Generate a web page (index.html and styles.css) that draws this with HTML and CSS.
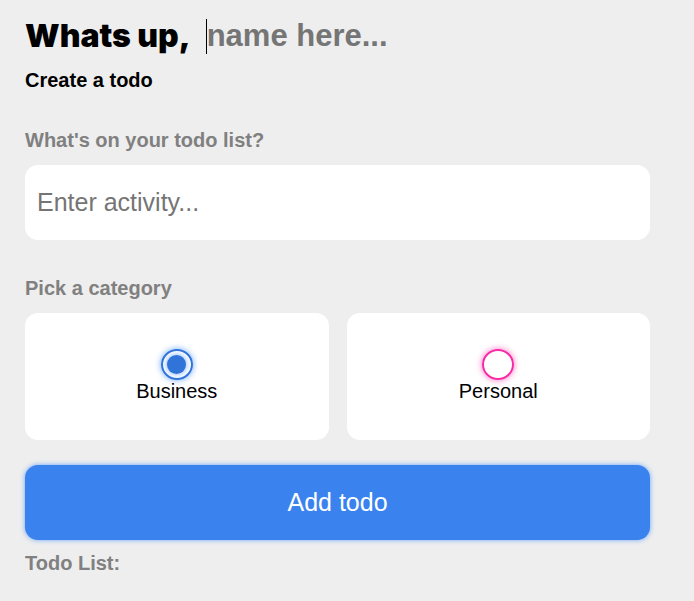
FILE: index.html
```html
<!DOCTYPE html>
<html lang="en">
<head>
<meta charset="utf-8">
<meta name="viewport" content="width=device-width, initial-scale=1">
<title>Todo</title>
<link rel="stylesheet" href="styles.css">
</head>
<body>
<main class="app">
  <header class="greeting">
    <label class="title" for="name">Whats up,</label>
    <span class="name-field"><input class="name-input" type="text" id="name" placeholder="name here..."></span>
  </header>
  <form class="create-todo">
    <h2 class="heading">Create a todo</h2>
    <label class="question" for="activity">What's on your todo list?</label>
    <input class="activity" type="text" id="activity" placeholder="Enter activity...">
    <h3 class="question" id="category-label">Pick a category</h3>
    <div class="options" role="radiogroup" aria-labelledby="category-label">
      <label class="option">
        <input class="radio business" type="radio" name="category" value="business" checked>
        <span>Business</span>
      </label>
      <label class="option">
        <input class="radio personal" type="radio" name="category" value="personal">
        <span>Personal</span>
      </label>
    </div>
    <button class="submit" type="submit">Add todo</button>
  </form>
  <h3 class="list-title">Todo List:</h3>
</main>
</body>
</html>
```
FILE: styles.css
```css
:root {
  --business: #3a82ee;
  --business-dark: #3074d9;
  --business-glow: rgba(64, 140, 255, 0.75);
  --personal: #f72ba5;
  --personal-glow: rgba(255, 64, 175, 0.75);
  --grey: #808080;
  --radius: 13px;
}

* {
  box-sizing: border-box;
  margin: 0;
  padding: 0;
}

body {
  background: #eee;
  color: #000;
  font-family: "Liberation Sans", Arial, sans-serif;
  font-size: 20px;
  line-height: 24px;
}

input,
button {
  border: none;
  outline: none;
  font-family: inherit;
}

.app {
  padding: 18px 44px 18px 25px;
}

.greeting {
  display: flex;
  align-items: center;
  gap: 15px;
  height: 36px;
}

.title {
  font-family: "Arial Black", Inter, sans-serif;
  font-size: 32px;
  font-weight: 900;
  line-height: 36px;
  white-space: nowrap;
}

.name-field {
  flex: 1;
  min-width: 0;
  display: flex;
  border-left: 1px solid #000;
}

.name-input {
  width: 100%;
  height: 35px;
  background: transparent;
  font-size: 31px;
  font-weight: 700;
}

.name-input::placeholder,
.activity::placeholder {
  color: #757575;
}

.create-todo {
  display: flex;
  flex-direction: column;
}

.heading {
  margin: 14px 0 36px;
  font-size: 20px;
}

.question,
.list-title {
  color: var(--grey);
  font-size: 20px;
  font-weight: 700;
}

.question {
  margin-bottom: 13px;
}

.activity {
  width: 100%;
  height: 75px;
  margin-bottom: 36px;
  padding: 0 12px;
  border-radius: var(--radius);
  background: #fff;
  font-size: 25px;
}

.options {
  display: grid;
  grid-template-columns: 1fr 1fr;
  gap: 18px;
  margin-bottom: 25px;
}

.option {
  display: flex;
  flex-direction: column;
  align-items: center;
  padding: 36px 12px 38px;
  border-radius: var(--radius);
  background: #fff;
  line-height: 22px;
}

.radio {
  appearance: none;
  display: grid;
  place-items: center;
  width: 32px;
  height: 31px;
  border: 2px solid;
  border-radius: 50%;
}

.business {
  border-color: var(--business-dark);
  box-shadow: 0 0 6px var(--business-glow);
}

.personal {
  border-color: var(--personal);
  box-shadow: 0 0 6px var(--personal-glow);
}

.radio:checked::before {
  content: "";
  width: 19px;
  height: 19px;
  border-radius: 50%;
  background: var(--business-dark);
  box-shadow: 0 0 6px var(--business-glow);
}

.submit {
  height: 75px;
  margin-bottom: 11px;
  border-radius: var(--radius);
  background: var(--business);
  box-shadow: 0 0 5px var(--business-glow);
  color: #fff;
  font-size: 25px;
  cursor: pointer;
}
```
